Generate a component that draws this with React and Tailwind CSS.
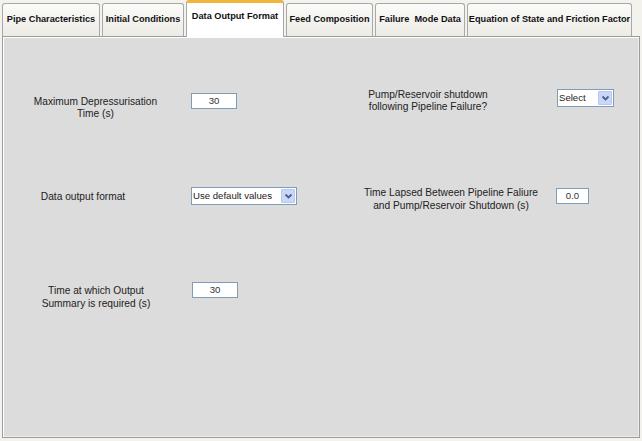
import React from "react";

const tabs = [
  { label: "Pipe Characteristics", w: "w-[98px]" },
  { label: "Initial Conditions", w: "w-[82px]" },
  { label: "Data Output Format", w: "w-[98px]", active: true },
  { label: "Feed Composition", w: "w-[87px]" },
  { label: "Failure\u00a0\u00a0Mode Data", w: "w-[90px]" },
  { label: "Equation of State and Friction Factor", w: "w-[165px]" },
];

const Chevron = () => (
  <svg width="9" height="7" viewBox="0 0 9 7">
    <path d="M1.5 1.5 L4.5 4.5 L7.5 1.5" fill="none" stroke="#4a5f8c" strokeWidth="1.8" />
  </svg>
);

const Combo = ({ value, w }) => (
  <div className={`${w} h-[18px] bg-white border border-[#7f9db9] flex items-center`}>
    <span className="flex-1 pl-[1px] text-[9.6px] text-[#222] leading-none truncate">{value}</span>
    <div className="w-[14px] h-[14px] mr-[1px] bg-[#c9d8f8] border border-[#b6c8ef] rounded-[1px] flex items-center justify-center">
      <Chevron />
    </div>
  </div>
);

const Field = ({ value, w }) => (
  <div className={`${w} h-[16px] bg-white border border-[#7f9db9] flex items-center justify-center text-[9.6px] text-[#333] leading-none`}>
    {value}
  </div>
);

const App = () => {
  return (
    <div className="w-[642px] h-[441px] bg-[#f3f2ed] flex flex-col font-['Liberation_Sans',Arial,sans-serif] text-[#222] overflow-hidden">
      {/* Tabs */}
      <div className="h-[36px] flex items-end gap-[2px] pl-[2px]">
        {tabs.map((t) =>
          t.active ? (
            <div
              key={t.label}
              className={`${t.w} h-[37px] -mb-[1px] relative z-10 bg-white border border-[#a8a8a8] border-b-0 border-t-[3px] border-t-[#f2b53c] rounded-t-[3px] flex items-center justify-center pb-[6px] text-[9.2px] font-bold text-[#111] whitespace-nowrap`}
            >
              {t.label}
            </div>
          ) : (
            <div
              key={t.label}
              className={`${t.w} h-[33px] bg-gradient-to-b from-[#fbfbf9] to-[#ecebe5] border border-[#a8a8a8] border-b-0 rounded-t-[3px] flex items-center justify-center text-[9.2px] font-bold text-[#111] whitespace-nowrap overflow-hidden`}
            >
              {t.label}
            </div>
          )
        )}
      </div>

      {/* Panel */}
      <div className="mx-[2px] mb-[3px] flex-1 bg-[#dcdcdc] border border-[#9c9c9c] shadow-[inset_1px_1px_0_#ffffff,inset_-1px_-1px_0_#ececec] flex text-[10.2px] leading-[12px]">
        {/* Left column */}
        <div className="w-[318px] pt-[56px] pl-[18px] flex flex-col">
          <div className="h-[94px] flex items-start">
            <div className="w-[149px] mt-[3px] text-center">
              Maximum Depressurisation
              <br />
              Time (s)
            </div>
            <div className="ml-[21px]">
              <Field value="30" w="w-[46px]" />
            </div>
          </div>
          <div className="h-[95px] flex items-start">
            <div className="w-[124px] mt-[4px] text-center">Data output format</div>
            <div className="ml-[46px]">
              <Combo value="Use default values" w="w-[106px]" />
            </div>
          </div>
          <div className="flex items-start">
            <div className="w-[150px] mt-[2px] text-center leading-[13px]">
              Time at which Output
              <br />
              Summary is required (s)
            </div>
            <div className="ml-[21px]">
              <Field value="30" w="w-[46px]" />
            </div>
          </div>
        </div>

        {/* Right column */}
        <div className="flex-1 pt-[52px] flex flex-col">
          <div className="h-[97px] flex items-start">
            <div className="ml-[17px] w-[180px] text-center">
              Pump/Reservoir shutdown
              <br />
              following Pipeline Failure?
            </div>
            <div className="ml-[39px]">
              <Combo value="Select" w="w-[57px]" />
            </div>
          </div>
          <div className="flex items-start">
            <div className="ml-[25px] w-[210px] text-center leading-[13px]">
              Time Lapsed Between Pipeline Faliure
              <br />
              and Pump/Reservoir Shutdown (s)
            </div>
            <div className="mt-[2px]">
              <Field value="0.0" w="w-[33px]" />
            </div>
          </div>
        </div>
      </div>
    </div>
  );
};

export default App;
